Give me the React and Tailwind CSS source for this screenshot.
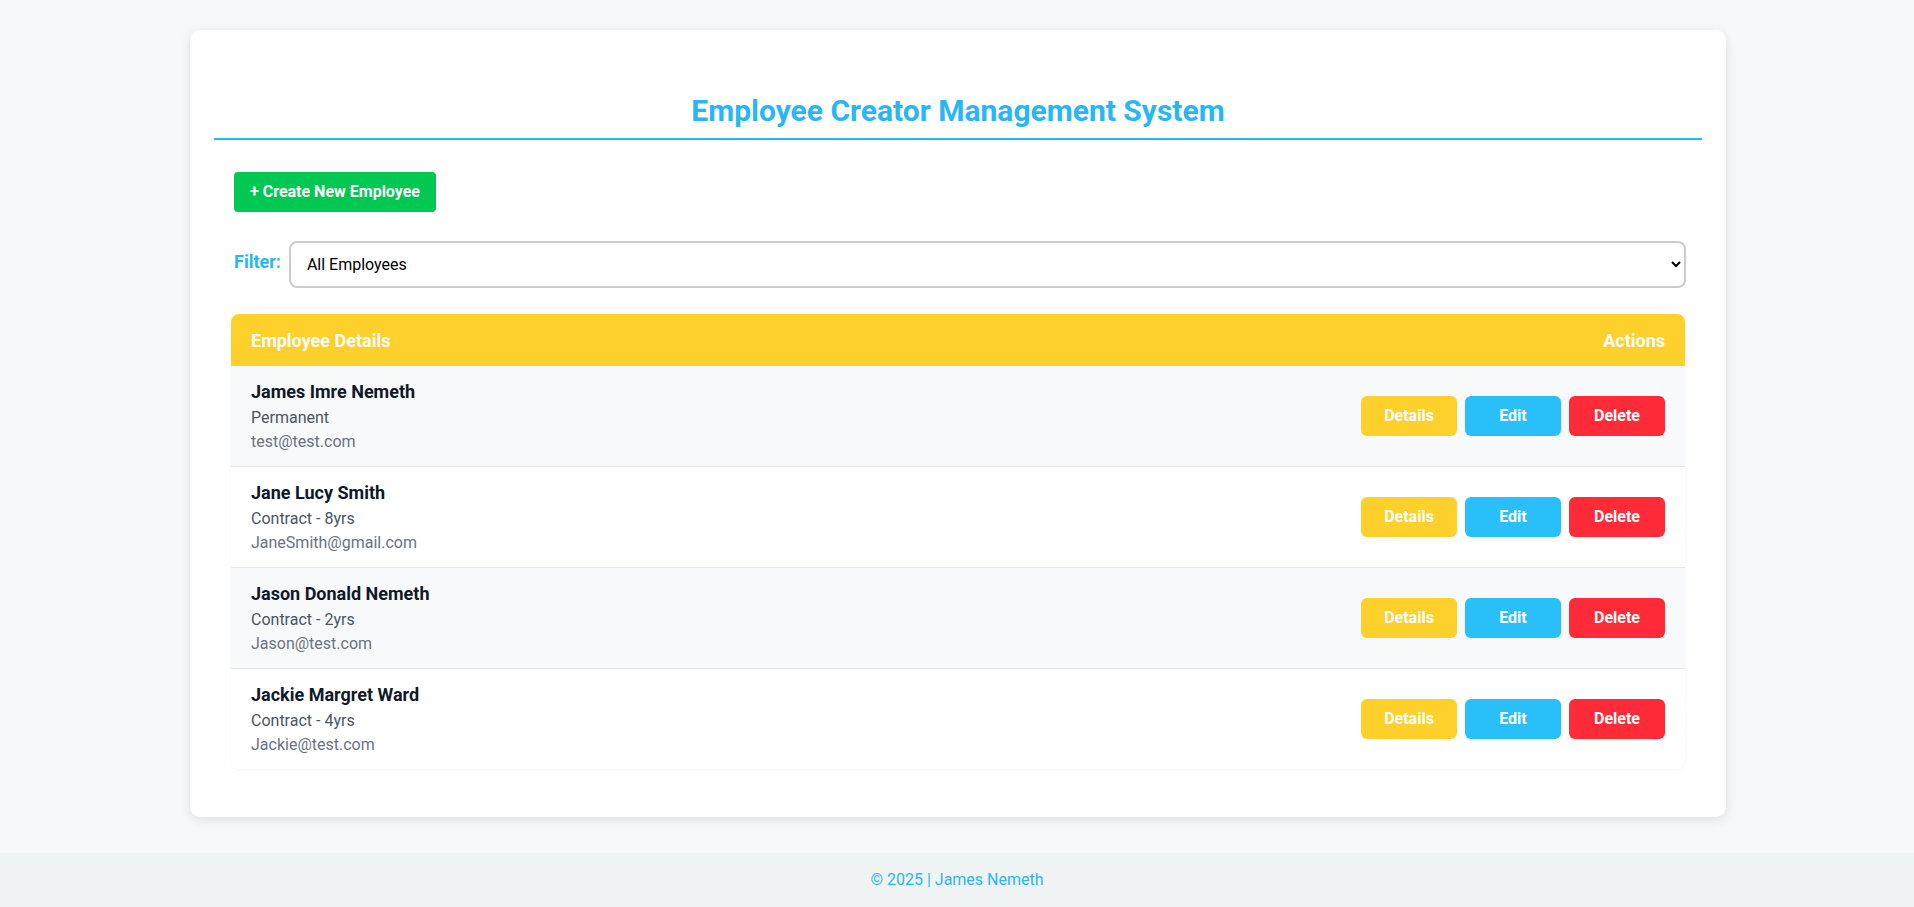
import React from "react";

const employees = [
  { name: "James Imre Nemeth", type: "Permanent", email: "test@test.com" },
  { name: "Jane Lucy Smith", type: "Contract - 8yrs", email: "JaneSmith@gmail.com" },
  { name: "Jason Donald Nemeth", type: "Contract - 2yrs", email: "Jason@test.com" },
  { name: "Jackie Margret Ward", type: "Contract - 4yrs", email: "Jackie@test.com" },
];

export default function App() {
  return (
    <div className="min-h-screen flex flex-col bg-[#f7f8f9] font-['Roboto',sans-serif]">
      <main className="flex-1 pt-[30px] pb-[36px] pl-[2px]">
        <div className="mx-auto w-[1536px] bg-white rounded-[10px] shadow-[0_3px_12px_rgba(0,0,0,0.10)] px-6 pt-[63px] pb-[48px]">
          <h1 className="text-center text-[30px] leading-[36px] font-bold text-[#29b6f6] border-b-2 border-[#29b6f6] pb-[9px]">
            Employee Creator Management System
          </h1>
          <div className="px-[17px]">
            <div className="pt-[32px] pl-[3px]">
              <button className="h-[40px] px-4 rounded-[4px] bg-[#00c853] text-white font-bold text-[16px]">
                + Create New Employee
              </button>
            </div>
            <div className="flex items-center mt-[29px] pl-[3px] mr-[-1px]">
              <label className="text-[18px] leading-[27px] font-bold text-[#29b6f6] mr-[8px] mb-[7px]">Filter:</label>
              <select className="flex-1 h-[47px] border-2 border-[#cccccc] rounded-[8px] bg-white pl-[12px] pr-[8px] text-[16px] text-black outline-none">
                <option>All Employees</option>
              </select>
            </div>
            <div className="mt-[26px] rounded-[8px] overflow-hidden shadow-[0_1px_3px_rgba(0,0,0,0.04)]">
              <div className="h-[52px] bg-[#fdd02b] flex items-center justify-between px-5 text-white font-bold text-[18px]">
                <span>Employee Details</span>
                <span>Actions</span>
              </div>
              {employees.map((e, i) => (
                <div
                  key={e.name}
                  className={
                    "flex items-center justify-between px-5 py-3 " +
                    (i % 2 === 0 ? "bg-[#f8f9fa] " : "bg-white ") +
                    (i < employees.length - 1 ? "border-b border-[#e5e7eb]" : "")
                  }
                >
                  <div>
                    <div className="text-[18px] leading-[28px] font-bold text-[#111827]">{e.name}</div>
                    <div className="text-[16px] leading-[24px] text-[#4b5563]">{e.type}</div>
                    <div className="text-[16px] leading-[24px] text-[#6b7280]">{e.email}</div>
                  </div>
                  <div className="flex gap-2">
                    <button className="w-[96px] h-[40px] rounded-[6px] bg-[#fdd02b] text-white font-bold text-[16px]">Details</button>
                    <button className="w-[96px] h-[40px] rounded-[6px] bg-[#29bff8] text-white font-bold text-[16px]">Edit</button>
                    <button className="w-[96px] h-[40px] rounded-[6px] bg-[#ff2b38] text-white font-bold text-[16px]">Delete</button>
                  </div>
                </div>
              ))}
            </div>
          </div>
        </div>
      </main>
      <footer className="h-[54px] bg-[#eff3f4] flex items-center justify-center text-[16px] text-[#29b6f6]">
        © 2025 | James Nemeth
      </footer>
    </div>
  );
}
